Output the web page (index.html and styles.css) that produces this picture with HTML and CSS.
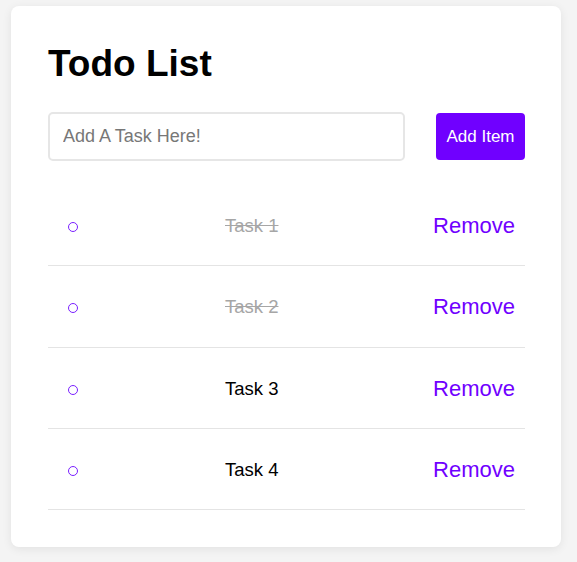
FILE: index.html
```html
<!DOCTYPE html>
<html lang="en">
<head>
<meta charset="utf-8">
<title>Todo List</title>
<link rel="stylesheet" href="styles.css">
</head>
<body>
  <div class="card">
    <h1 class="title">Todo List</h1>
    <form class="add-row" onsubmit="return false">
      <input class="task-input" type="text" placeholder="Add A Task Here!">
      <button class="add-btn" type="submit">Add Item</button>
    </form>
    <ul class="list">
      <li class="item"><span class="dot"></span><span class="text done">Task 1</span><span class="remove">Remove</span></li>
      <li class="item"><span class="dot"></span><span class="text done">Task 2</span><span class="remove">Remove</span></li>
      <li class="item"><span class="dot"></span><span class="text">Task 3</span><span class="remove">Remove</span></li>
      <li class="item"><span class="dot"></span><span class="text">Task 4</span><span class="remove">Remove</span></li>
    </ul>
  </div>
</body>
</html>
```
FILE: styles.css
```css
html, body {
  margin: 0;
  padding: 0;
  background: #f4f4f4;
  font-family: "Liberation Sans", Arial, Helvetica, sans-serif;
}

body {
  padding: 6px 16px 16px 11px;
}

.card {
  width: 550px;
  box-sizing: border-box;
  background: #fff;
  border-radius: 8px;
  box-shadow: 0 2px 10px rgba(0, 0, 0, 0.08);
  padding: 40px 36px 37px 37px;
}

.title {
  margin: 0;
  font-size: 37px;
  line-height: 36px;
  font-weight: 700;
  color: #000;
}

.add-row {
  display: flex;
  align-items: center;
  justify-content: space-between;
  margin-top: 30px;
}

.task-input {
  width: 357px;
  height: 49px;
  box-sizing: border-box;
  border: 2px solid #e6e6e6;
  border-radius: 5px;
  padding: 0 13px;
  font-family: inherit;
  font-size: 18px;
  color: #333;
  outline: none;
}

.task-input::placeholder {
  color: #777;
}

.add-btn {
  width: 89px;
  height: 47px;
  border: none;
  border-radius: 4px;
  background: #7000ff;
  color: #fff;
  font-family: inherit;
  font-size: 17px;
  padding: 0;
}

.list {
  list-style: none;
  margin: 24px 0 0;
  padding: 0;
}

.item {
  display: grid;
  grid-template-columns: 157px 1fr auto;
  align-items: center;
  height: 81.3px;
  box-sizing: border-box;
  padding: 2px 10px 0 20px;
  border-bottom: 1.5px solid #e4e4e4;
}

.dot {
  width: 8px;
  height: 8px;
  border: 1.6px solid #7a1fff;
  border-radius: 50%;
  margin-top: 2px;
}

.text {
  font-size: 18.5px;
  color: #000;
}

.text.done {
  color: #a6a6a6;
  text-decoration: line-through;
}

.remove {
  font-size: 22px;
  color: #7000ff;
}
```
